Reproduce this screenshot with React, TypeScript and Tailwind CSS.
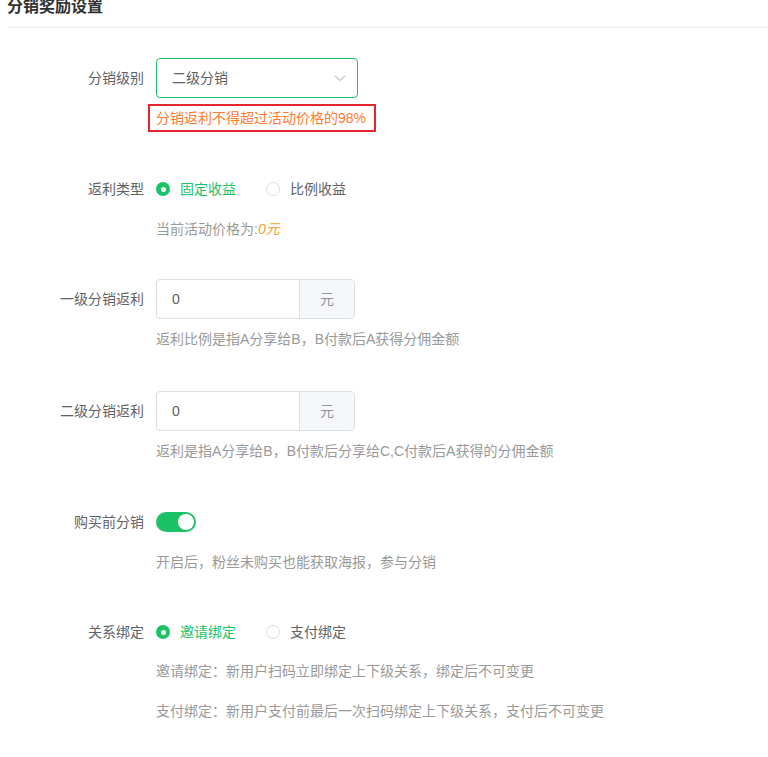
import React from 'react';

const green = 'bg-[#1bc266]';

function Label({ children }: { children: React.ReactNode }) {
  return <div className="w-[144px] shrink-0 text-right text-[14px] text-[#606266]">{children}</div>;
}

function Radio({ checked, label }: { checked?: boolean; label: string }) {
  return (
    <div className="flex items-center">
      {checked ? (
        <span className={`flex h-[14px] w-[14px] items-center justify-center rounded-full ${green}`}>
          <span className="h-[5px] w-[5px] rounded-full bg-white" />
        </span>
      ) : (
        <span className="h-[14px] w-[14px] rounded-full border border-[#dcdfe6] bg-white" />
      )}
      <span className={`ml-[10px] text-[14px] ${checked ? 'text-[#1bc266]' : 'text-[#606266]'}`}>{label}</span>
    </div>
  );
}

function Hint({ children, className = '' }: { children: React.ReactNode; className?: string }) {
  return (
    <div className={`flex h-[20px] items-center pl-[156px] text-[14px] leading-[20px] text-[#999999] ${className}`}>
      {children}
    </div>
  );
}

function AmountInput() {
  return (
    <div className="flex h-[40px] w-[199px] overflow-hidden rounded-[4px] border border-[#dcdfe6]">
      <div className="flex flex-1 items-center px-[15px] text-[14px] text-[#606266]">0</div>
      <div className="flex w-[55px] items-center justify-center border-l border-[#dcdfe6] bg-[#f5f7fa] text-[14px] text-[#909399]">
        元
      </div>
    </div>
  );
}

export default function App() {
  return (
    <div
      className="h-[757px] w-[768px] overflow-hidden bg-white"
      style={{ fontFamily: '"Liberation Sans", "Noto Sans CJK SC", sans-serif' }}
    >
      <div className="ml-[7px] h-[29px] border-b border-[#ebeef5]">
        <div className="-mt-[1px] text-[16px] font-bold leading-[16px] text-[#303133]">分销奖励设置</div>
      </div>

      <div className="mt-[30px] flex h-[40px] items-center gap-[12px]">
        <Label>分销级别</Label>
        <div className="flex h-[40px] w-[202px] items-center justify-between rounded-[4px] border border-[#1bc266] pl-[15px] pr-[10px]">
          <span className="text-[14px] text-[#606266]">二级分销</span>
          <svg width="14" height="14" viewBox="0 0 14 14" fill="none">
            <path d="M2 5l5 4.5L12 5" stroke="#c0c4cc" strokeWidth="1.2" />
          </svg>
        </div>
      </div>

      <div className="ml-[148px] mt-[6px] flex h-[28px] w-[228px] items-center border-2 border-[#e5262e] pl-[6px] text-[14px] text-[#ff7b2f]">
        分销返利不得超过活动价格的98%
      </div>

      <div className="mt-[47px] flex h-[20px] items-center gap-[12px]">
        <Label>返利类型</Label>
        <div className="flex items-center gap-[30px]">
          <Radio checked label="固定收益" />
          <Radio label="比例收益" />
        </div>
      </div>
      <Hint className="mt-[20px]">
        当前活动价格为:<span className="italic text-[#f5a02b]">0元</span>
      </Hint>

      <div className="mt-[40px] flex h-[40px] items-center gap-[12px]">
        <Label>一级分销返利</Label>
        <AmountInput />
      </div>
      <Hint className="mt-[10px]">返利比例是指A分享给B，B付款后A获得分佣金额</Hint>

      <div className="mt-[42px] flex h-[40px] items-center gap-[12px]">
        <Label>二级分销返利</Label>
        <AmountInput />
      </div>
      <Hint className="mt-[10px]">返利是指A分享给B，B付款后分享给C,C付款后A获得的分佣金额</Hint>

      <div className="mt-[51px] flex h-[20px] items-center gap-[12px]">
        <Label>购买前分销</Label>
        <div className={`flex h-[20px] w-[40px] items-center justify-end rounded-full ${green} pr-[2px]`}>
          <span className="h-[16px] w-[16px] rounded-full bg-white" />
        </div>
      </div>
      <Hint className="mt-[20px]">开启后，粉丝未购买也能获取海报，参与分销</Hint>

      <div className="mt-[50px] flex h-[20px] items-center gap-[12px]">
        <Label>关系绑定</Label>
        <div className="flex items-center gap-[30px]">
          <Radio checked label="邀请绑定" />
          <Radio label="支付绑定" />
        </div>
      </div>
      <Hint className="mt-[19px]">邀请绑定：新用户扫码立即绑定上下级关系，绑定后不可变更</Hint>
      <Hint className="mt-[20px]">支付绑定：新用户支付前最后一次扫码绑定上下级关系，支付后不可变更</Hint>
    </div>
  );
}
